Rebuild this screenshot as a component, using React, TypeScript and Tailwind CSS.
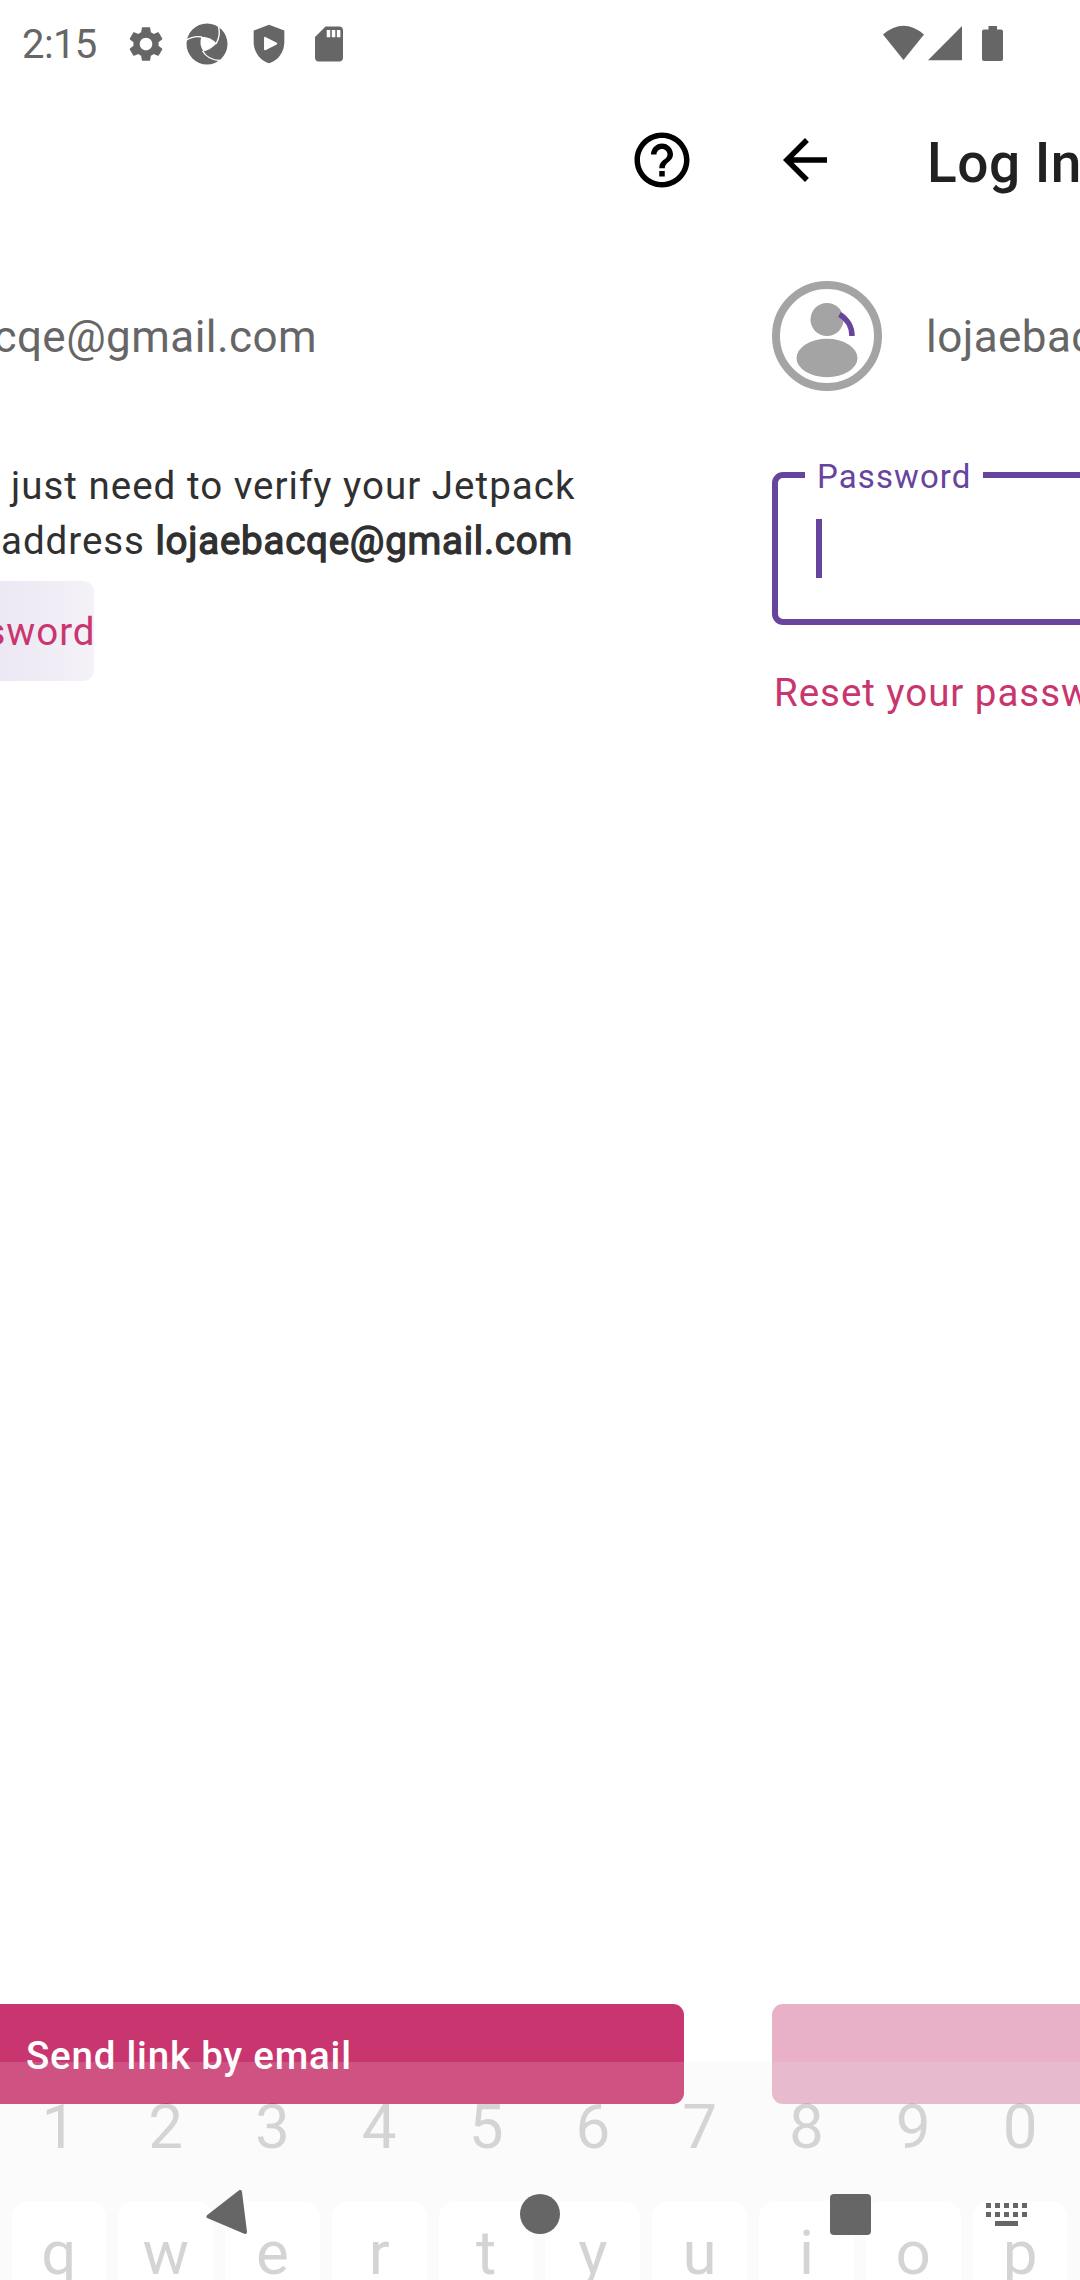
import type { ReactNode } from "react";

const GEAR =
  "M19.14 12.94c.04-.3.06-.61.06-.94 0-.32-.02-.64-.07-.94l2.03-1.58c.18-.14.23-.41.12-.61l-1.92-3.32c-.12-.22-.37-.29-.59-.22l-2.39.96c-.5-.38-1.03-.7-1.62-.94l-.36-2.54c-.04-.24-.24-.41-.48-.41h-3.84c-.24 0-.43.17-.47.41l-.36 2.54c-.59.24-1.13.57-1.62.94l-2.39-.96c-.22-.08-.47 0-.59.22L2.74 8.87c-.12.21-.08.47.12.61l2.03 1.58c-.05.3-.09.63-.09.94s.02.64.07.94l-2.03 1.58c-.18.14-.23.41-.12.61l1.92 3.32c.12.22.37.29.59.22l2.39-.96c.5.38 1.03.7 1.62.94l.36 2.54c.05.24.24.41.48.41h3.84c.24 0 .44-.17.47-.41l.36-2.54c.59-.24 1.13-.56 1.62-.94l2.39.96c.22.08.47 0 .59-.22l1.92-3.32c.12-.22.07-.47-.12-.61l-2.01-1.58zM12 15.6c-1.98 0-3.6-1.62-3.6-3.6s1.62-3.6 3.6-3.6 3.6 1.62 3.6 3.6-1.62 3.6-3.6 3.6z";
const HELP =
  "M11 18h2v-2h-2v2zm1-16C6.48 2 2 6.48 2 12s4.48 10 10 10 10-4.48 10-10S17.52 2 12 2zm0 18c-4.41 0-8-3.59-8-8s3.59-8 8-8 8 3.59 8 8-3.59 8-8 8zm0-14c-2.21 0-4 1.79-4 4h2c0-1.1.9-2 2-2s2 .9 2 2c0 2-3 1.75-3 5h2c0-2.25 3-2.5 3-5 0-2.21-1.79-4-4-4z";
const BACK = "M20 11H7.83l5.59-5.59L12 4l-8 8 8 8 1.41-1.41L7.83 13H20v-2z";
const SD =
  "M18 2h-8L4 8v12c0 1.100.9 2 2 2h12c1.100 0 2-.9 2-2V4c0-1.100-.9-2-2-2zm-5.300 6.200h-2V4h2v4.200zm2.900 0h-2V4h2v4.200zm2.900 0h-2V4h2v4.200z";

function StatusBar() {
  return (
    <div className="flex h-[88px] items-center text-[#666666]">
      <span className="ml-[22px] w-[104px] pt-[2px] text-[40px] leading-[86px] tracking-[-0.600px]">2:15</span>
      <svg className="-ml-px h-[42px] w-[42px] shrink-0" viewBox="0 0 24 24" fill="currentColor"><path d={GEAR} /></svg>
      <svg className="ml-[19px] h-[42px] w-[42px] shrink-0" viewBox="0 0 42 42">
        <circle cx="21" cy="21" r="20.500" fill="currentColor" />
        <path d="M15.500 13.800Q25 14 30.500 20.500Q25 26.500 17.500 28.500Q12.500 21 15.500 13.800Z" fill="#fff" />
        <g fill="none" stroke="#fff" strokeWidth="1.400">
          <path d="M0 17.500Q7 12.500 16 14" />
          <path d="M32.500 4Q35 12 30 21" />
          <path d="M16.500 28Q22 37 34 37.500" />
        </g>
      </svg>
      <svg className="ml-[18px] h-[46px] w-[46px] shrink-0" viewBox="0 0 24 24">
        <path fill="currentColor" d="M12 2 4 5v6.090c0 5.050 3.410 9.760 8 10.910 4.590-1.150 8-5.860 8-10.910V5z" />
        <path fill="#fff" stroke="#fff" strokeLinejoin="round" d="M9.900 8.800v6l5.900-3z" />
      </svg>
      <svg className="ml-[16px] h-[42px] w-[42px] shrink-0" viewBox="0 0 24 24" fill="currentColor"><path d={SD} /></svg>
      <div className="ml-auto flex pr-[76px]">
        <svg className="h-[38px] w-[122px]" viewBox="882 24.500 122 38" fill="currentColor">
          <path d="M883 34Q903.500 16.500 924 34L903.500 59.500Z" />
          <path d="M928 59.700 962 25.500V59.700Z" />
          <path d="M988.500 25.500H997V29H1001Q1003 29 1003 31V58.500Q1003 60.500 1001 60.500H984Q982 60.500 982 58.500V31Q982 29 984 29H988.500Z" />
        </svg>
      </div>
    </div>
  );
}

function LeftScreen() {
  return (
    <section className="flex w-[728px] shrink-0 flex-col overflow-hidden">
      <div className="flex h-[144px] items-center justify-end pr-[33px]">
        <svg className="h-[66px] w-[66px]" viewBox="0 0 24 24"><path d={HELP} /></svg>
      </div>
      <div className="mt-[49px] flex h-[110px] w-[317px] items-center justify-end whitespace-nowrap pt-[2px] text-[44px] tracking-[0.440px] text-[#666666]">
        lojaebacqe@gmail.com
      </div>
      <div className="mt-[67px] whitespace-nowrap text-[38.500px] leading-[55px] text-[#303030]">
        <p className="pl-[11px] tracking-[1.010px]">just need to verify your Jetpack</p>
        <p className="pl-[1px] tracking-[0.960px]">
          address <span className="tracking-[0.750px] [-webkit-text-stroke:1.300px_#303030]">lojaebacqe@gmail.com</span>
        </p>
      </div>
      <div className="mt-[13px] flex h-[100px] w-[94px] items-center justify-end whitespace-nowrap rounded-r-[11px] bg-linear-to-r from-[#ece8f4] to-[#f4f1f8] pt-[2px] text-[38.500px] tracking-[0.960px] text-[#c9356e]">
        <span className="-mr-[1.500px]">password</span>
      </div>
      <div className="mt-auto flex h-[100px] w-[684px] items-center rounded-r-[11px] bg-[#c9356e] pl-[26px] pt-[3px] text-[38.500px] font-medium tracking-[0.780px] text-white">
        Send link by email
      </div>
    </section>
  );
}

function RightScreen() {
  return (
    <section className="flex w-[352px] shrink-0 flex-col overflow-hidden whitespace-nowrap pl-[44px]">
      <div className="flex h-[144px] items-center">
        <svg className="h-[66px] w-[66px] shrink-0" viewBox="0 0 24 24"><path d={BACK} /></svg>
        <h1 className="ml-[89px] pt-[6px] text-[55px] font-medium leading-[66px] tracking-[0.500px] text-[#212121]">Log In</h1>
      </div>
      <div className="mt-[49px] flex h-[110px] items-center">
        <svg className="h-[110px] w-[110px] shrink-0" viewBox="0 0 110 110" fill="#a4a4a4">
          <circle cx="55" cy="55" r="51" fill="none" stroke="#a4a4a4" strokeWidth="8" />
          <circle cx="55" cy="38.500" r="16.500" />
          <ellipse cx="55" cy="77" rx="30.500" ry="19.200" />
          <path d="M67.500 33.300A25 25 0 0 1 80 55" fill="none" stroke="#68459c" strokeWidth="5.500" />
        </svg>
        <span className="ml-[44px] pt-[2px] text-[44px] tracking-[0.440px] text-[#666666]">lojaebacqe@gmail.com</span>
      </div>
      <div className="relative mt-[81px] h-[153px] w-[400px] rounded-[11px] border-[6px] border-[#68459c] pl-[38px] pt-[41px]">
        <span className="absolute left-[27px] top-[-23px] w-[178px] bg-white pl-[12px] text-[33px] leading-[44px] tracking-[1.100px] text-[#68459c]">Password</span>
        <div className="h-[59px] w-[6px] bg-[#68459c]" />
      </div>
      <div className="mt-[39px] pl-[2px] text-[38.500px] leading-[58px] tracking-[0.960px] text-[#c9356e]">Reset your password?</div>
      <div className="mt-auto h-[100px] w-[400px] rounded-[11px] bg-[#e9b1c8]" />
    </section>
  );
}

function Row({ children }: { children: ReactNode }) {
  return <div className="flex gap-[12px] pl-[11.500px] pr-[12.500px] text-center">{children}</div>;
}

function Keyboard() {
  return (
    <div className="absolute inset-x-0 bottom-0 h-[218px] overflow-hidden bg-[#e8eaed] text-[62px] text-black opacity-[0.165]">
      <Row>
        {[..."1234567890"].map((n) => (
          <span key={n} className="h-[139px] flex-1 pt-[29px] leading-[72px]">{n}</span>
        ))}
      </Row>
      <Row>
        {[..."qwertyuiop"].map((k) => (
          <span key={k} className="h-[120px] flex-1 rounded-[16px] bg-white pt-[16px] leading-[72px]">{k}</span>
        ))}
      </Row>
    </div>
  );
}

function NavBar() {
  return (
    <div className="absolute inset-x-0 bottom-0 flex h-[132px] items-center text-[#666666]">
      <svg className="ml-[205px] h-[48px] w-[46px]" viewBox="205 2190 46 48" fill="currentColor" stroke="currentColor" strokeWidth="4" strokeLinejoin="round">
        <path d="M208.500 2216.500 240 2192 245 2232Z" />
      </svg>
      <div className="ml-[269px] h-[40px] w-[40px] rounded-full bg-[#666666]" />
      <div className="ml-[270px] h-[41px] w-[41px] rounded-[4px] bg-[#666666]" />
      <svg className="ml-[114px] h-[24px] w-[43px]" viewBox="0 0 43 24" fill="currentColor">
        {[1, 10, 19, 28, 37].map((x) => (
          <g key={x}><path d={`M${x} 1h5v5h-5z`} /><path d={`M${x} 10h5v5h-5z`} /></g>
        ))}
        <path d="M10 19h23v5H10z" />
      </svg>
    </div>
  );
}

export default function App() {
  return (
    <main className="relative flex h-[2280px] w-[1080px] flex-col overflow-hidden bg-white font-[Roboto,sans-serif]">
      <StatusBar />
      <div className="flex min-h-0 flex-1 pb-[176px]">
        <LeftScreen />
        <RightScreen />
      </div>
      <Keyboard />
      <NavBar />
    </main>
  );
}
